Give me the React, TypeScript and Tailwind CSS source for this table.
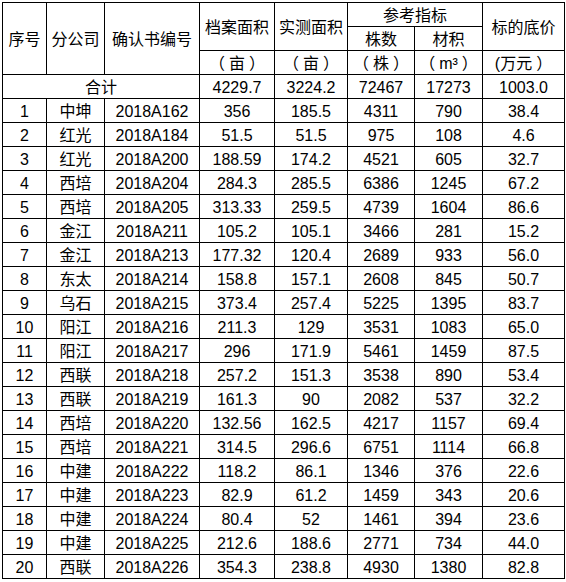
const rows: [string, string, string, string, string, string, string, string][] = [
    ['1', '中坤', '2018A162', '356', '185.5', '4311', '790', '38.4'],
    ['2', '红光', '2018A184', '51.5', '51.5', '975', '108', '4.6'],
    ['3', '红光', '2018A200', '188.59', '174.2', '4521', '605', '32.7'],
    ['4', '西培', '2018A204', '284.3', '285.5', '6386', '1245', '67.2'],
    ['5', '西培', '2018A205', '313.33', '259.5', '4739', '1604', '86.6'],
    ['6', '金江', '2018A211', '105.2', '105.1', '3466', '281', '15.2'],
    ['7', '金江', '2018A213', '177.32', '120.4', '2689', '933', '56.0'],
    ['8', '东太', '2018A214', '158.8', '157.1', '2608', '845', '50.7'],
    ['9', '乌石', '2018A215', '373.4', '257.4', '5225', '1395', '83.7'],
    ['10', '阳江', '2018A216', '211.3', '129', '3531', '1083', '65.0'],
    ['11', '阳江', '2018A217', '296', '171.9', '5461', '1459', '87.5'],
    ['12', '西联', '2018A218', '257.2', '151.3', '3538', '890', '53.4'],
    ['13', '西联', '2018A219', '161.3', '90', '2082', '537', '32.2'],
    ['14', '西培', '2018A220', '132.56', '162.5', '4217', '1157', '69.4'],
    ['15', '西培', '2018A221', '314.5', '296.6', '6751', '1114', '66.8'],
    ['16', '中建', '2018A222', '118.2', '86.1', '1346', '376', '22.6'],
    ['17', '中建', '2018A223', '82.9', '61.2', '1459', '343', '20.6'],
    ['18', '中建', '2018A224', '80.4', '52', '1461', '394', '23.6'],
    ['19', '中建', '2018A225', '212.6', '188.6', '2771', '734', '44.0'],
    ['20', '西联', '2018A226', '354.3', '238.8', '4930', '1380', '82.8'],
];

const cell = 'border border-black p-0 pt-[3px] text-center align-middle leading-[20px] whitespace-nowrap';

// full-width brackets in the unit row sit a bit apart from the unit
const Unit = ({ half = false, children }: { half?: boolean; children: React.ReactNode }) => (
    <>
        {half ? '(' : '（'}
        <span className={half ? 'pr-[4px]' : 'px-[4px]'}>{children}</span>）
    </>
);

const App = () => {
    return (
        <div className="flex bg-white pt-[2px] pl-[2px] font-['Liberation_Sans','Noto_Sans_CJK_SC',sans-serif] text-[16px] text-black">
            <table className="table-fixed border-collapse w-[562px]">
                <colgroup>
                    <col className="w-[44px]" />
                    <col className="w-[58px]" />
                    <col className="w-[95px]" />
                    <col className="w-[75px]" />
                    <col className="w-[73px]" />
                    <col className="w-[67px]" />
                    <col className="w-[68px]" />
                    <col className="w-[82px]" />
                </colgroup>
                <tbody>
                    <tr className="h-[24px]">
                        <td rowSpan={3} className={cell}>序号</td>
                        <td rowSpan={3} className={cell}>分公司</td>
                        <td rowSpan={3} className={cell}>确认书编号</td>
                        <td rowSpan={2} className={cell}>档案面积</td>
                        <td rowSpan={2} className={cell}>实测面积</td>
                        <td colSpan={2} className={cell}>参考指标</td>
                        <td rowSpan={2} className={cell}>标的底价</td>
                    </tr>
                    <tr className="h-[24px]">
                        <td className={cell}>株数</td>
                        <td className={cell}>材积</td>
                    </tr>
                    <tr className="h-[24px]">
                        <td className={cell}><Unit>亩</Unit></td>
                        <td className={cell}><Unit>亩</Unit></td>
                        <td className={cell}><Unit>株</Unit></td>
                        <td className={cell}><Unit>m³</Unit></td>
                        <td className={cell}><Unit half>万元</Unit></td>
                    </tr>
                    <tr className="h-[24px]">
                        <td colSpan={3} className={cell}>合计</td>
                        <td className={cell}>4229.7</td>
                        <td className={cell}>3224.2</td>
                        <td className={cell}>72467</td>
                        <td className={cell}>17273</td>
                        <td className={cell}>1003.0</td>
                    </tr>
                    {rows.map((r) => (
                        <tr key={r[0]} className="h-[24px]">
                            {r.map((v, i) => (
                                <td key={i} className={cell}>
                                    {v}
                                </td>
                            ))}
                        </tr>
                    ))}
                </tbody>
            </table>
            <div className="w-[1px] shrink-0" />
            <div className="w-[1px] shrink-0 self-stretch bg-[#dadcdd]" />
        </div>
    );
};

export default App;
